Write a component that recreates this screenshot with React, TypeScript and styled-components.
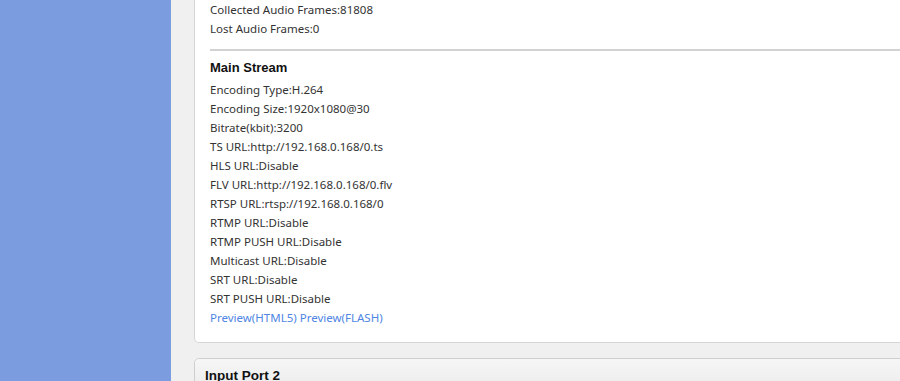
import styled, { createGlobalStyle } from "styled-components";

const GlobalStyle = createGlobalStyle`
    html, body {
        margin: 0;
        padding: 0;
        overflow: hidden;
        background: #f0f0f0;
    }
`

const mainStream = [
    "Encoding Type:H.264",
    "Encoding Size:1920x1080@30",
    "Bitrate(kbit):3200",
    "TS URL:http://192.168.0.168/0.ts",
    "HLS URL:Disable",
    "FLV URL:http://192.168.0.168/0.flv",
    "RTSP URL:rtsp://192.168.0.168/0",
    "RTMP URL:Disable",
    "RTMP PUSH URL:Disable",
    "Multicast URL:Disable",
    "SRT URL:Disable",
    "SRT PUSH URL:Disable",
]

export default function App() {
    return (
        <Page>
            <GlobalStyle />
            <Sidebar />
            <Content>
                <Panel>
                    <Line>Collected Audio Frames:81808</Line>
                    <Line>Lost Audio Frames:0</Line>
                    <Divider />
                    <Heading>Main Stream</Heading>
                    {mainStream.map((item, index) => <Line key={"main-" + index}>{item}</Line>)}
                    <Line>
                        <PreviewLink href="#">Preview(HTML5)</PreviewLink> <PreviewLink href="#">Preview(FLASH)</PreviewLink>
                    </Line>
                </Panel>
                <PortPanel>
                    <PortHeader>Input Port 2</PortHeader>
                </PortPanel>
            </Content>
        </Page>
    )
}

const Page = styled.div`
    display: flex;
    width: 900px;
    height: 381px;
    overflow: hidden;
`

const Sidebar = styled.div`
    width: 171px;
    flex-shrink: 0;
    background: #7b9de0;
`

const Content = styled.div`
    flex: 1;
    padding-left: 23px;
    display: flex;
    flex-direction: column;
    gap: 15px;
    overflow: hidden;
`

const Panel = styled.div`
    width: calc(100% + 20px);
    box-sizing: border-box;
    background: #fff;
    border: 1px solid #d6d6d6;
    border-top: none;
    border-radius: 0 0 5px 5px;
    padding: 0 0 15px 15px;
    font-family: "Noto Sans", "Open Sans", sans-serif;
    font-size: 11.5px;
    color: #333;
`

const Line = styled.div`
    line-height: 19px;
    height: 19px;
    white-space: nowrap;
`

const Divider = styled.div`
    height: 2px;
    background: #d2d2d2;
    margin: 11px 0 8px;
`

const Heading = styled.h3`
    font-family: "Liberation Sans", Arial, sans-serif;
    font-size: 13px;
    font-weight: bold;
    color: #111;
    margin: 0 0 3px;
    line-height: 18px;
`

const PreviewLink = styled.a`
    color: #4f86e4;
    text-decoration: none;
`

const PortPanel = styled.div`
    width: calc(100% + 20px);
    box-sizing: border-box;
    border: 1px solid #cfcfcf;
    border-radius: 5px 5px 0 0;
    background: #fff;
    flex-shrink: 0;
`

const PortHeader = styled.div`
    background: linear-gradient(#f6f6f6 0, #ececec 100%);
    border-radius: 5px 5px 0 0;
    height: 22px;
    padding: 8px 10px 0;
    font-family: "Liberation Sans", Arial, sans-serif;
    font-size: 13.5px;
    font-weight: bold;
    line-height: 17px;
    color: #111;
`
